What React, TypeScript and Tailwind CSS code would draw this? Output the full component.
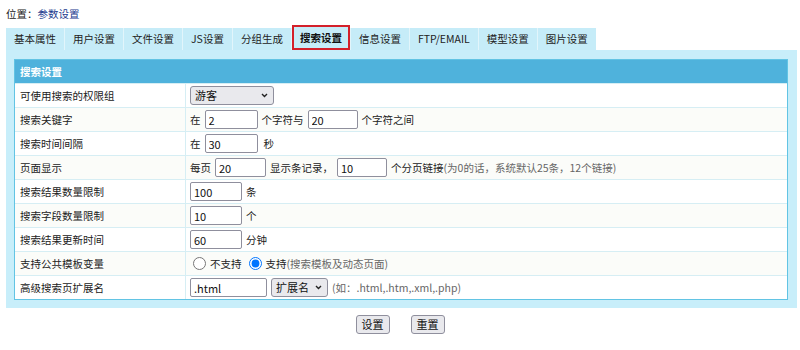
import React from 'react'

const tabs = ['基本属性', '用户设置', '文件设置', 'JS设置', '分组生成', '搜索设置', '信息设置', 'FTP/EMAIL', '模型设置', '图片设置']

function TextBox({ value, w = 'w-[53px]' }: { value: string; w?: string }) {
  return (
    <input
      type="text"
      defaultValue={value}
      className={`${w} h-[19px] rounded-[2px] border border-[#8f8f9d] bg-white px-[3px] text-[11px] leading-none text-[#111] outline-none`}
    />
  )
}

function Dropdown({ label, w }: { label: string; w: string }) {
  return (
    <div className={`relative ${w} h-[19px]`}>
      <select
        defaultValue={label}
        className="h-full w-full appearance-none rounded-[3px] border border-[#8f8f9d] bg-[#e9e9ed] pl-[4px] text-[11px] font-normal leading-none text-[#111] outline-none"
      >
        <option>{label}</option>
      </select>
      <svg className="pointer-events-none absolute right-[6px] top-[7px]" width="7" height="5" viewBox="0 0 7 5">
        <path d="M1 1 L3.5 3.5 L6 1" fill="none" stroke="#222" strokeWidth="1.4" />
      </svg>
    </div>
  )
}

function Row({ label, children, alt }: { label: string; children: React.ReactNode; alt?: boolean }) {
  return (
    <div className={`grid h-[24px] grid-cols-[171px_1fr] border-t border-[#d6eef4] ${alt ? 'bg-[#fbfcf9]' : 'bg-white'}`}>
      <div className="flex items-center border-r border-[#d6eef4] pl-[5px] text-[#222]">{label}</div>
      <div className="flex items-center gap-[4px] whitespace-nowrap pl-[4px] text-[#222]">{children}</div>
    </div>
  )
}

function Hint({ children }: { children: React.ReactNode }) {
  return <span className="text-[#666]">{children}</span>
}

export default function App() {
  return (
    <div
      className="w-[800px] pl-[6px] pr-[3px] pt-[7px] text-[10.5px] leading-[14px]"
      style={{ fontFamily: '"Noto Sans CJK SC", "Liberation Sans", sans-serif' }}
    >
      <div className="h-[14px] text-[#222]">
        位置：<span className="text-[#1d3c8f]">参数设置</span>
      </div>

      {/* tab strip */}
      <div className="mt-[7px] flex">
        <div className="flex h-[22px] items-end gap-px bg-[#e2f5fb]">
          {tabs.map((t) =>
            t === '搜索设置' ? (
              <div
                key={t}
                className="flex h-[25px] shrink-0 items-center whitespace-nowrap border-2 border-[#d4202a] bg-[#c6ecf8] px-[6px] font-bold text-[#111]"
              >
                {t}
              </div>
            ) : (
              <div key={t} className="flex h-[22px] shrink-0 items-center whitespace-nowrap bg-[#c6ecf8] px-[8px] text-[#222]">
                {t}
              </div>
            )
          )}
        </div>
      </div>

      {/* panel */}
      <div className="bg-[#c8eefa] pb-[8px] pl-[8px] pr-[9px] pt-[9px]">
        <div className="border border-[#62c4e4]">
          <div className="flex h-[23px] items-center bg-[#4fb2dc] pl-[5px] font-bold text-white">搜索设置</div>

          <Row label="可使用搜索的权限组">
            <Dropdown label="游客" w="w-[84px]" />
          </Row>
          <Row label="搜索关键字" alt>
            <span>在</span>
            <TextBox value="2" />
            <span>个字符与</span>
            <TextBox value="20" w="w-[50px]" />
            <span>个字符之间</span>
          </Row>
          <Row label="搜索时间间隔">
            <span>在</span>
            <TextBox value="30" />
            <span className="ml-[2px]">秒</span>
          </Row>
          <Row label="页面显示" alt>
            <span>每页</span>
            <TextBox value="20" w="w-[51px]" />
            <span>显示条记录，</span>
            <TextBox value="10" w="w-[50px]" />
            <span>
              个分页链接<Hint>(为0的话，系统默认25条，12个链接)</Hint>
            </span>
          </Row>
          <Row label="搜索结果数量限制">
            <TextBox value="100" w="w-[52px]" />
            <span>条</span>
          </Row>
          <Row label="搜索字段数量限制" alt>
            <TextBox value="10" w="w-[52px]" />
            <span>个</span>
          </Row>
          <Row label="搜索结果更新时间">
            <TextBox value="60" w="w-[52px]" />
            <span>分钟</span>
          </Row>
          <Row label="支持公共模板变量" alt>
            <label className="ml-[3px] flex items-center gap-[4px]">
              <input type="radio" name="tpl" className="m-0 h-[13px] w-[13px]" />
              不支持
            </label>
            <label className="ml-[3px] flex items-center gap-[4px]">
              <input type="radio" name="tpl" defaultChecked className="m-0 h-[13px] w-[13px]" />
              <span>
                支持<Hint>(搜索模板及动态页面)</Hint>
              </span>
            </label>
          </Row>
          <Row label="高级搜索页扩展名">
            <TextBox value=".html" w="w-[77px]" />
            <Dropdown label="扩展名" w="w-[57px]" />
            <Hint>(如：.html,.htm,.xml,.php)</Hint>
          </Row>
        </div>
      </div>

      <div className="mt-[7px] flex justify-center gap-[21px] pr-[3px]">
        <button className="h-[19px] rounded-[3px] border border-[#8f8f9d] bg-[#e9e9ed] px-[5px] text-[11px] leading-none text-[#111]">
          设置
        </button>
        <button className="h-[19px] rounded-[3px] border border-[#8f8f9d] bg-[#e9e9ed] px-[5px] text-[11px] leading-none text-[#111]">
          重置
        </button>
      </div>
    </div>
  )
}
